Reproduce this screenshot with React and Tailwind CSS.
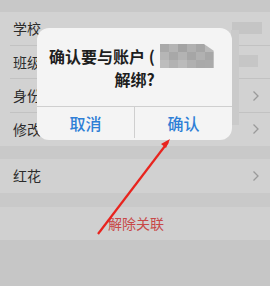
import React from "react";

const font = { fontFamily: '"Noto Sans CJK SC", "Noto Sans", sans-serif' };

function Chevron() {
  return (
    <svg width="8" height="12" viewBox="0 0 8 12" className="shrink-0">
      <path d="M1.5 1.5 L6 6 L1.5 10.5" fill="none" stroke="#9a9a9a" strokeWidth="1.3" />
    </svg>
  );
}

function Row({ label, chevron, last }) {
  return (
    <div className="flex h-[33.5px] items-center pl-[13px] pr-[10px] relative">
      <span className="flex-1 text-[14px] text-[#2c2c2c]">{label}</span>
      {chevron && <Chevron />}
      {!last && <div className="absolute left-[10px] right-0 bottom-0 h-px bg-[#c2c2c2]" />}
    </div>
  );
}

const mosaic = [
  ["#a9a9a9", "#b4b4b4", "#a3a3a3", "#b0b0b0", "#a6a6a6", "#b9b9b9"],
  ["#b6b6b6", "#a8a8a8", "#b3b3b3", "#a6a6a6", "#b1b1b1", "#a7a7a7"],
  ["#bdbdbd", "#b2b2b2", "#bbbbbb", "#b0b0b0", "#a9a9a9", "#aaaaaa"],
];

export default function App() {
  return (
    <div className="relative w-[270px] h-[286px] overflow-hidden bg-[#c6c6c6]" style={font}>
      <div className="h-[12px] bg-[#c8c8c8]" />
      <div className="bg-[#d2d2d2]">
        <Row label="学校" />
        <Row label="班级" />
        <Row label="身份" chevron />
        <Row label="修改" chevron last />
      </div>
      <div className="h-[13px] bg-[#c9c9c9]" />
      <div className="bg-[#d1d1d1]">
        <Row label="红花" chevron last />
      </div>
      <div className="h-[14px] bg-[#c9c9c9]" />
      <div className="h-[33px] bg-[#d0d0d0] flex items-center pl-[108px]">
        <span className="text-[14px] text-[#c84848]">解除关联</span>
      </div>

      {/* outside mosaic bits */}
      <div className="absolute left-[232px] top-[22px] w-[30px] h-[12px] bg-[#c5c5c5]" />
      <div className="absolute left-[232px] top-[55px] w-[26px] h-[12px] bg-[#c6c6c6]" />
      <div className="absolute left-[231px] top-[30px] w-[8px] h-[95px] bg-[#cacaca]" />

      {/* dialog */}
      <div className="absolute left-[37px] top-[28px] w-[195px] h-[112px] rounded-[12px] bg-[#f4f4f4] flex flex-col">
        <div className="h-[79px] flex flex-col items-center pt-[16px] border-b border-[#cfcfcf]">
          <div className="flex items-center text-[16px] font-semibold text-[#1e1e1e] leading-[23px] w-full pl-[12px]">
            <span>确认要与账户 (</span>
            <div className="ml-[5px] relative w-[54px] h-[24px] overflow-hidden" style={{ clipPath: "polygon(0 0, 82% 0, 100% 28%, 100% 100%, 0 100%)" }}>
              <div className="grid grid-cols-6 grid-rows-3 w-full h-full">
                {mosaic.flat().map((c, i) => (
                  <div key={i} style={{ background: c }} />
                ))}
              </div>
            </div>
          </div>
          <div className="text-[16px] font-semibold text-[#1e1e1e] leading-[23px]">解绑?</div>
        </div>
        <div className="flex flex-1 pb-[2px]">
          <div className="flex-1 flex items-center justify-center text-[16px] font-medium text-[#2f7fd6] border-r border-[#cfcfcf]">取消</div>
          <div className="flex-1 flex items-center justify-center text-[16px] font-medium text-[#2f7fd6]">确认</div>
        </div>
      </div>

      {/* red arrow */}
      <svg className="absolute left-0 top-0" width="270" height="286" viewBox="0 0 270 286">
        <path d="M98 234 L168 142" stroke="#e8241e" strokeWidth="2.2" fill="none" />
        <path d="M170 139 L161 144 L166 148 Z" fill="#e8241e" />
      </svg>
    </div>
  );
}
